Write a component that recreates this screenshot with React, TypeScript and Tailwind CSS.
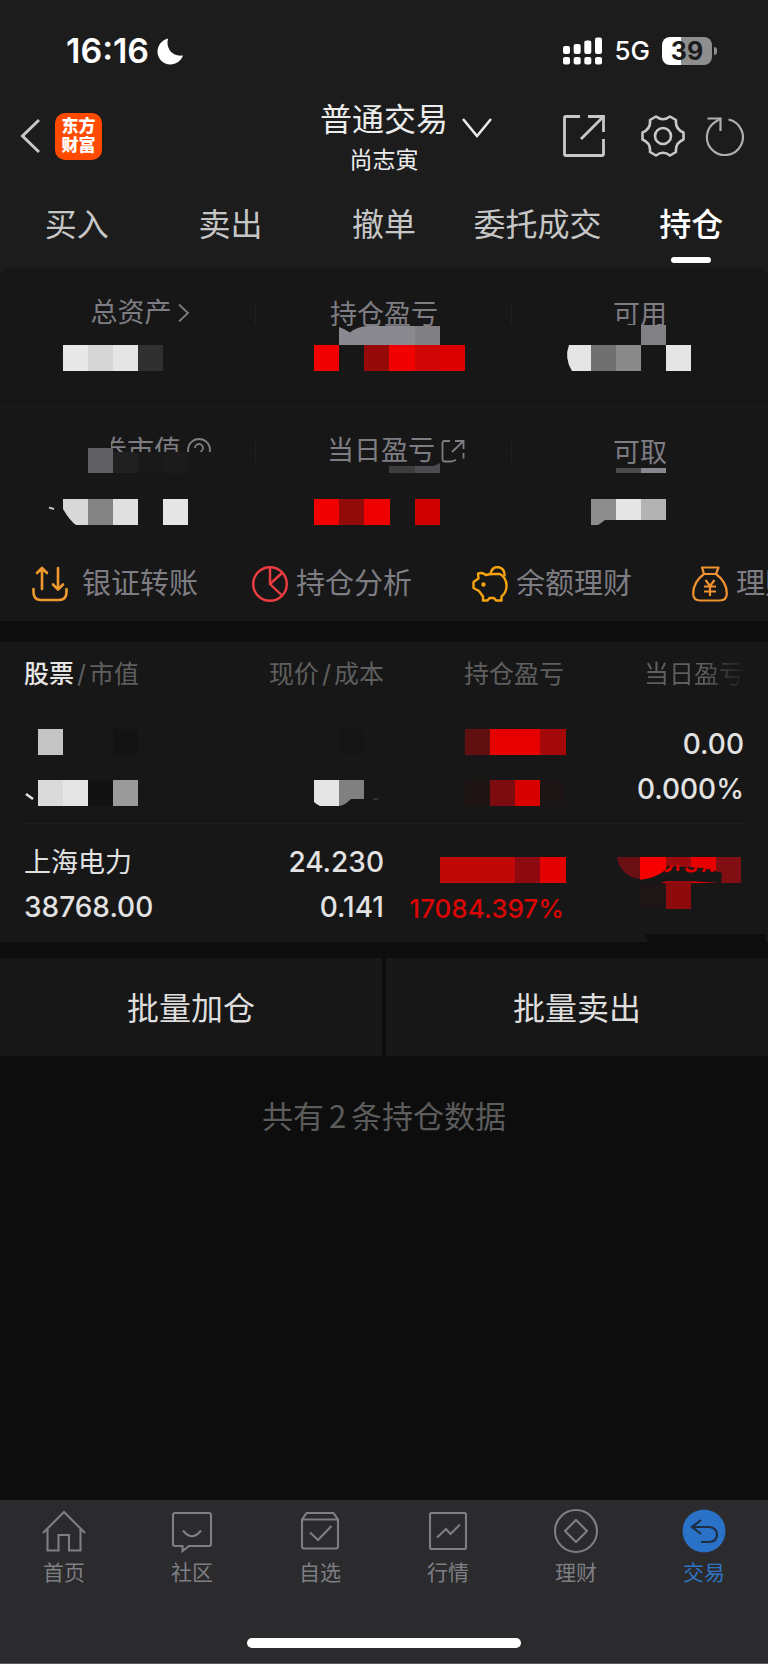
import type { ReactNode } from 'react';

/** A filled rectangle of a masked value: x, y, width, height, colour. */
type Block = [number, number, number, number, string];

interface MaskProps {
  blocks: Block[];
  width?: number;
  height?: number;
  children?: ReactNode;
}

/** Pixelated cover laid over a sensitive value in its cell. */
function Mask({ blocks, width = 256, height = 138, children }: MaskProps) {
  return (
    <svg
      className="absolute inset-0 w-full h-full overflow-visible pointer-events-none"
      viewBox={`0 0 ${width} ${height}`}
      aria-hidden="true"
    >
      {blocks.map(([x, y, w, h, fill]) => (
        <rect key={`${x}-${y}`} x={x} y={y} width={w} height={h} fill={fill} />
      ))}
      {children}
    </svg>
  );
}

function StatusBar() {
  return (
    <div className="flex items-center justify-between h-[94px] pt-2 pl-[66px] pr-[51px] text-white">
      <div className="flex items-center gap-2">
        <span className="text-[34px] leading-10 font-semibold">16:16</span>
        <svg className="w-[27px] h-[27px]" viewBox="0 0 27 27" fill="currentColor">
          <path d="M11 0.5C8.5 10 15 19 26 17.5C24 23 19 26.5 13.5 26.5C6 26.5 0.5 20.8 0.5 13.5C0.5 7.5 4.8 2 11 0.5z" />
        </svg>
      </div>
      <div className="flex items-center gap-3">
        <svg className="w-[39px] h-7" viewBox="0 0 39 28" fill="currentColor">
          <rect x="0" y="9" width="7" height="8" rx="2" />
          <rect x="10.7" y="7" width="7" height="10" rx="2" />
          <rect x="21.3" y="3.5" width="7" height="13.500" rx="2" />
          <rect x="32" y="0.500" width="7" height="16.500" rx="2" />
          <rect x="0" y="20" width="7" height="7.500" rx="2" />
          <rect x="10.7" y="20" width="7" height="7.500" rx="2" />
          <rect x="21.3" y="20" width="7" height="7.500" rx="2" />
          <rect x="32" y="20" width="7" height="7.500" rx="2" />
        </svg>
        <span className="text-[26px] leading-8 font-medium">5G</span>
        <div className="flex items-center gap-0.5">
          <div className="flex items-center justify-center w-[50px] h-7 rounded-lg bg-linear-to-r from-white from-39% to-[#8e8e8e] to-39% text-[25px] leading-7 font-bold text-[#1c1c1c]">
            39
          </div>
          <div className="w-[3px] h-2 rounded-r-full bg-[#8e8e8e]" />
        </div>
      </div>
    </div>
  );
}

function Header() {
  return (
    <header className="grid grid-cols-3 items-center h-[84px] text-[#c8c8c8]">
      <div className="flex items-center gap-[15px] pl-5">
        <button type="button" aria-label="返回">
          <svg className="w-5 h-9" viewBox="0 0 20 36" fill="none" stroke="currentColor" strokeWidth="3">
            <path d="M19 2L2.500 18L19 34" />
          </svg>
        </button>
        <div className="flex flex-col items-center justify-center w-[47px] h-[47px] rounded-[10px] bg-[#ff4a00] text-white text-[17px] leading-[19px] font-black">
          <span>东方</span>
          <span>财富</span>
        </div>
      </div>
      <div className="flex flex-col items-center pt-1 text-[#ececec]">
        <button type="button" className="relative text-[32px] leading-[44px] whitespace-nowrap">
          普通交易
          <svg
            className="absolute left-full top-1/2 ml-3.5 -mt-0.5 w-[30px] h-5"
            viewBox="0 0 30 20"
            fill="none"
            stroke="currentColor"
            strokeWidth="2.500"
          >
            <path d="M1 1L15 18L29 1" />
          </svg>
        </button>
        <span className="text-[23px] leading-9">尚志寅</span>
      </div>
      <div className="flex items-center justify-end pr-6">
        <button type="button" aria-label="分享" className="mr-9">
          <svg className="w-[42px] h-[42px]" viewBox="0 0 42 42" fill="none" stroke="currentColor" strokeWidth="2.800">
            <path d="M17 1.500H2.500Q1.500 1.500 1.500 2.500V39.500Q1.500 40.500 2.500 40.500H39.500Q40.500 40.500 40.500 39.500V24" />
            <path d="M25 1.500H40.500V17M40 2L18 24" />
          </svg>
        </button>
        <button type="button" aria-label="设置" className="mr-5">
          <svg className="w-11 h-[42px]" viewBox="0 0 44 42" fill="none" stroke="currentColor" strokeWidth="2.600" strokeLinejoin="round">
            <path d="M15 1.500Q22 7 29 1.500L35 5Q34 14 42.500 17.500V24.500Q34 28 35 37L29 40.500Q22 35 15 40.500L9 37Q10 28 1.500 24.500V17.500Q10 14 9 5z" />
            <circle cx="22" cy="21" r="8" />
          </svg>
        </button>
        <button type="button" aria-label="刷新">
          <svg className="w-[39px] h-[39px]" viewBox="0 0 39 39" fill="none" stroke="currentColor" strokeWidth="2.200" opacity="0.85">
            <path d="M23.500 2.500A18 18 0 1 1 11 4.500L15.500 1.500" />
            <path d="M2.500 1.500H15.500V14" />
          </svg>
        </button>
      </div>
    </header>
  );
}

const TABS = ['买入', '卖出', '撤单', '委托成交', '持仓'];

function TradeTabs() {
  return (
    <nav className="grid grid-cols-5 h-[90px] text-[32px] leading-10">
      {TABS.map((tab) => (
        <button
          key={tab}
          type="button"
          className={
            tab === '持仓'
              ? 'flex flex-col items-center pt-[27px] font-medium text-white'
              : 'flex flex-col items-center pt-[27px] text-[#c6c6c6]'
          }
        >
          <span className="whitespace-nowrap">{tab}</span>
          {tab === '持仓' && <span className="mt-3 w-10 h-1.5 rounded-full bg-white" />}
        </button>
      ))}
    </nav>
  );
}

interface AssetCellProps {
  label: string;
  icon?: ReactNode;
  divider?: boolean;
  children: ReactNode;
}

function AssetCell({ label, icon, divider, children }: AssetCellProps) {
  return (
    <div className="relative h-[138px]">
      <div
        className={
          icon
            ? 'flex items-center justify-center gap-1.5 pt-[25px] text-[27px] leading-10 text-[#7e7d83]'
            : 'flex items-center justify-center pt-[27px] text-[27px] leading-10 text-[#7e7d83]'
        }
      >
        {label}
        {icon}
      </div>
      {divider && <div className="absolute right-0 top-9 w-px h-5 bg-[#202020]" />}
      {children}
    </div>
  );
}

function Assets() {
  return (
    <div className="grid grid-cols-3">
      <AssetCell
        label="总资产"
        divider
        icon={
          <svg className="w-3 h-[18px] -mr-6" viewBox="0 0 12 18" fill="none" stroke="currentColor" strokeWidth="1.800">
            <path d="M1 0.500L10 9L1 17.500" />
          </svg>
        }
      >
        <Mask
          blocks={[
            [63, 77, 25, 26, '#e8e8e8'],
            [88, 77, 25, 26, '#d6d6d6'],
            [113, 77, 25, 26, '#e5e5e5'],
            [138, 77, 25, 26, '#303030'],
          ]}
        />
      </AssetCell>
      <AssetCell label="持仓盈亏" divider>
        <Mask
          blocks={[
            [58, 77, 25, 26, '#f00000'],
            [108, 77, 25, 26, '#970a0a'],
            [133, 77, 26, 26, '#f00000'],
            [159, 77, 25, 26, '#d00505'],
            [184, 77, 25, 26, '#dd0000'],
          ]}
        >
          <path d="M83 59Q89 61 94 64.500Q102 58 112 58H159V77H83z" fill="#8a898f" />
          <path d="M159 58H184V77H159z" fill="#808083" />
        </Mask>
      </AssetCell>
      <AssetCell label="可用">
        <Mask
          blocks={[
            [98, 57, 31, 20, '#171717'],
            [129, 57, 25, 20, '#808085'],
            [79, 77, 25, 26, '#707070'],
            [104, 77, 25, 26, '#8a8a8a'],
            [154, 77, 25, 26, '#e5e5e5'],
          ]}
        >
          <path d="M57 77H79V103H60Q52 90 57 77z" fill="#e5e5e5" />
        </Mask>
      </AssetCell>
      <div className="col-span-3 -mb-px h-px bg-[#1e1e1e]" />
      <AssetCell
        label="证券市值"
        divider
        icon={
          <svg className="w-6 h-6 -mr-7 overflow-visible" viewBox="0 0 24 24" fill="none" stroke="currentColor" strokeWidth="1.800">
            <circle cx="12" cy="11" r="11" />
            <path d="M8 9a4 4 0 1 1 6 3.500q-2 1.200-2 3" />
          </svg>
        }
      >
        <Mask
          blocks={[
            [60, 28, 51, 34, '#171717'],
            [111, 46, 110, 20, '#171717'],
            [88, 42, 25, 25, '#605f64'],
            [113, 46, 25, 21, '#202020'],
            [138, 46, 25, 21, '#191919'],
            [163, 46, 25, 21, '#1b1b1b'],
            [88, 93, 25, 26, '#838383'],
            [113, 93, 25, 26, '#e0e0e0'],
            [163, 93, 25, 26, '#e5e5e5'],
          ]}
        >
          <path d="M63 93H88V119H76Q70 115 63 103z" fill="#d8d8d8" />
          <path d="M49 101.500L54 103" stroke="#c0c0c0" strokeWidth="2" />
        </Mask>
      </AssetCell>
      <AssetCell
        label="当日盈亏"
        divider
        icon={
          <svg className="w-6 h-6 -mr-6" viewBox="0 0 24 24" fill="none" stroke="currentColor" strokeWidth="1.800">
            <path d="M9 2H3.500Q1.500 2 1.500 4V20Q1.500 22.500 4 22.500H10L15 21" />
            <path d="M14 2H22.500V10M22 2.500L11 13M22.500 14V19.500" />
          </svg>
        }
      >
        <Mask
          blocks={[
            [133, 60, 26, 7, '#3d3d40'],
            [58, 93, 25, 26, '#f00000'],
            [83, 93, 25, 26, '#930a0a'],
            [108, 93, 26, 26, '#ee0000'],
            [159, 93, 25, 26, '#d00000'],
          ]}
        >
          <path d="M159 60H178L184 57V67H159z" fill="#4c4c50" />
        </Mask>
      </AssetCell>
      <AssetCell label="可取">
        <Mask
          blocks={[
            [104, 62, 25, 5, '#4a4a4c'],
            [129, 62, 25, 5, '#87878d'],
            [104, 93, 25, 21, '#e5e5e5'],
            [129, 93, 25, 21, '#b3b3b3'],
          ]}
        >
          <path d="M79 93H104V114H93Q88 118 86 119H79z" fill="#8d8d8d" />
        </Mask>
      </AssetCell>
    </div>
  );
}

const SHORTCUTS: { label: string; icon: ReactNode }[] = [
  {
    label: '银证转账',
    icon: (
      <svg className="w-9 h-9 mr-1.5" viewBox="0 0 36 36" fill="none" stroke="#f0992e" strokeWidth="2.600" strokeLinecap="round" strokeLinejoin="round">
        <path d="M10 23V2.500M5 7L10 2L15 7M26 2V23M21 18.500L26 23.500L31 18.500" />
        <path d="M1.500 23V26Q1.500 34 9 34H27Q34.500 34 34.500 26V23" />
      </svg>
    ),
  },
  {
    label: '持仓分析',
    icon: (
      <svg className="w-9 h-9" viewBox="0 0 36 36" fill="none" stroke="#ec3c40" strokeWidth="2.400">
        <circle cx="18" cy="18" r="16.800" />
        <path d="M18 1V18L30 29.500M18 18L30 7" />
      </svg>
    ),
  },
  {
    label: '余额理财',
    icon: (
      <svg className="w-9 h-9" viewBox="0 0 36 36" fill="none" stroke="#f6a511" strokeWidth="2.400" strokeLinejoin="round">
        <path d="M6 7.500Q10 6 14 9Q17 8 21 8H28Q35 12 34.500 21Q34 27 29.500 30.500V34.500H24L22 32H17.500L15.500 34.500H11V30.500L7 25L1.500 22V16L6.500 12.500z" />
        <path d="M18.500 7.500Q20 1 26 1Q33 2 32.500 10.500" />
        <circle cx="11.500" cy="18.500" r="1" fill="#f6a511" />
      </svg>
    ),
  },
  {
    label: '理财产品',
    icon: (
      <svg className="w-9 h-9" viewBox="0 0 36 36" fill="none" stroke="#f0922f" strokeWidth="2.200" strokeLinejoin="round">
        <path d="M10 1.500H26.500L24 8H12z" />
        <path d="M12 8Q1 16 1.200 28Q1.500 34.500 8 34.500H28Q34.500 34.500 34.800 28Q35 16 24 8" />
        <path d="M13.500 14L18 20L22.500 14M12 20.500H24M12 25.500H24M18 20V30" />
      </svg>
    ),
  },
];

function Shortcuts() {
  return (
    <div className="flex h-[77px] pl-8 pt-0.5 overflow-hidden">
      {SHORTCUTS.map(({ label, icon }) => (
        <button
          key={label}
          type="button"
          className="flex items-center gap-2 w-[220px] shrink-0 text-[29px] leading-10 text-[#7e7d83]"
        >
          {icon}
          <span className="whitespace-nowrap">{label}</span>
        </button>
      ))}
    </div>
  );
}

function Holdings() {
  return (
    <section className="px-6 bg-[#171717]">
      <table className="w-full table-fixed text-right text-[28px] leading-[45px] font-medium text-[#e2e2e2]">
        <thead className="text-[25px] leading-[64px] text-[#5f5f5f]">
          <tr className="whitespace-nowrap">
            <th className="p-0 text-left font-normal">
              <span className="font-medium text-[#e6e6e6]">股票</span>
              <span className="mx-[3px]">/</span>市值
            </th>
            <th className="p-0 font-normal">
              现价<span className="mx-[3px]">/</span>成本
            </th>
            <th className="p-0 font-normal">持仓盈亏</th>
            <th className="p-0 font-normal">
              <span className="bg-linear-to-r from-[#5f5f5f] from-60% to-[#1c1c1c] bg-clip-text text-transparent">
                当日盈亏
              </span>
            </th>
          </tr>
        </thead>
        <tbody>
          <tr>
            <td className="p-0">
              <div className="relative h-[117px]">
                <Mask
                  width={180}
                  height={117}
                  blocks={[
                    [14, 23, 25, 26, '#c5c5c5'],
                    [89, 23, 25, 26, '#131313'],
                    [14, 74, 25, 26, '#dadada'],
                    [39, 74, 25, 26, '#e5e5e5'],
                    [64, 74, 25, 26, '#121212'],
                    [89, 74, 25, 26, '#9a9a9a'],
                  ]}
                >
                  <path d="M2 88L9 93" stroke="#e5e5e5" strokeWidth="2.500" />
                </Mask>
              </div>
            </td>
            <td className="p-0">
              <div className="relative h-[117px]">
                <Mask width={180} height={117} blocks={[[135, 23, 25, 26, '#151515']]}>
                  <path d="M110 74H135V100H116Q112 98 110 96z" fill="#e5e5e5" />
                  <path d="M135 74H160V93H147Q140 100 135 100z" fill="#808080" />
                  <path d="M169 93H174" stroke="#333333" strokeWidth="2" />
                </Mask>
              </div>
            </td>
            <td className="p-0">
              <div className="relative h-[117px]">
                <Mask
                  width={180}
                  height={117}
                  blocks={[
                    [81, 23, 25, 26, '#601010'],
                    [106, 23, 50, 26, '#e60000'],
                    [156, 23, 26, 26, '#a50808'],
                    [81, 74, 25, 26, '#1f1414'],
                    [106, 74, 25, 26, '#7d0c10'],
                    [131, 74, 25, 26, '#d90000'],
                    [156, 74, 25, 26, '#1b1516'],
                  ]}
                />
              </div>
            </td>
            <td className="p-0">
              <div className="h-[117px] pt-4">
                <div>0.00</div>
                <div>0.000%</div>
              </div>
            </td>
          </tr>
          <tr className="border-t border-[#1e1e1e]">
            <td className="p-0 text-left">
              <div className="h-[118px] pt-4">
                <div className="text-[27px] leading-[45px] font-normal">上海电力</div>
                <div>38768.00</div>
              </div>
            </td>
            <td className="p-0">
              <div className="h-[118px] pt-4">
                <div>24.230</div>
                <div>0.141</div>
              </div>
            </td>
            <td className="p-0">
              <div className="relative h-[118px] pt-[62px] text-[26px] leading-[45px] text-[#dc0505]">
                17084.397%
                <Mask
                  width={180}
                  height={118}
                  blocks={[
                    [56, 33, 75, 26, '#c00808'],
                    [131, 33, 25, 26, '#8d0a10'],
                    [156, 33, 26, 26, '#e20000'],
                  ]}
                />
              </div>
            </td>
            <td className="p-0">
              <div className="relative h-[118px]">
                <Mask
                  width={180}
                  height={118}
                  blocks={[
                    [76, 33, 26, 26, '#f60000'],
                    [102, 33, 25, 26, '#9a0a0e'],
                    [127, 33, 25, 26, '#e80000'],
                    [152, 33, 25, 26, '#7f0f12'],
                    [76, 59, 26, 25, '#1d1516'],
                    [102, 59, 25, 26, '#8d0a0d'],
                  ]}
                >
                  <path d="M53 33H76V55Q56 52 53 33z" fill="#6a1014" />
                  <path d="M75 56Q92 54 100 47L104 42L140 44L158 49L157 59L122 57H103L94 60H75z" fill="#171717" />
                  <path
                    d="M108 41Q107 47 101 47M114 41V47M122 44Q124 48 129 47Q133 46 132 42M139 48L143 42M148 43V48"
                    fill="none"
                    stroke="#e00000"
                    strokeWidth="2.800"
                  />
                  <path d="M81 110H202V119H86z" fill="#0d0d0d" />
                </Mask>
              </div>
            </td>
          </tr>
        </tbody>
      </table>
    </section>
  );
}

const NAV_ITEMS: { label: string; icon: ReactNode }[] = [
  { label: '首页', icon: <path d="M1 23L22 2L43 23M5.500 19V40.500H16.500V25H27V40.500H38.500V19" /> },
  {
    label: '社区',
    icon: (
      <>
        <path d="M5 3H39Q41 3 41 5V34Q41 36 39 36H19L12.500 41V36H5Q3 36 3 34V5Q3 3 5 3z" />
        <path d="M13 20.500Q22 32 31 20.500" />
      </>
    ),
  },
  {
    label: '自选',
    icon: (
      <>
        <path d="M4 9.500L8.500 3H35.500L40 9.500V36.500Q40 38.500 38 38.500H6Q4 38.500 4 36.500zM4 9.500H40" />
        <path d="M12 22.500L20 30L33.500 16" />
      </>
    ),
  },
  {
    label: '行情',
    icon: (
      <>
        <rect x="4" y="3" width="36" height="36" rx="1.500" />
        <path d="M11 27.500L20 19L24.500 24L34 14.500" />
      </>
    ),
  },
  {
    label: '理财',
    icon: (
      <>
        <circle cx="22" cy="21" r="21" />
        <path d="M22 10L33 21L22 32L11 21z" strokeLinejoin="round" />
      </>
    ),
  },
  {
    label: '交易',
    icon: (
      <>
        <circle cx="22" cy="21" r="21.500" fill="#2a72c8" stroke="none" />
        <path d="M19 10L10 17L19 24M10 17H27.500Q35 18 35 24.500Q35 31.500 27.500 32H19" stroke="#1f2d40" strokeWidth="2.200" />
      </>
    ),
  },
];

function BottomNav() {
  return (
    <footer className="mt-auto bg-[#2b2b2d] border-b border-[#5a5a5c]">
      <nav className="grid grid-cols-6 h-[138px] pt-2.5 text-[21px] leading-8">
        {NAV_ITEMS.map(({ label, icon }) => (
          <a
            key={label}
            href="#"
            className={
              label === '交易'
                ? 'flex flex-col items-center gap-[3px] text-[#2f74c4]'
                : 'flex flex-col items-center gap-[3px] text-[#7f7e84]'
            }
          >
            <svg
              className="w-11 h-11 overflow-visible"
              viewBox="0 0 44 44"
              fill="none"
              stroke="currentColor"
              strokeWidth="2.100"
            >
              {icon}
            </svg>
            {label}
          </a>
        ))}
      </nav>
      <div className="pb-[15px]">
        <div className="mx-auto w-[274px] h-2.5 rounded-full bg-white" />
      </div>
    </footer>
  );
}

export default function App() {
  return (
    <div className="flex flex-col min-h-screen bg-[#0d0d0d] font-['Inter','Noto_Sans_CJK_SC',sans-serif]">
      <div className="bg-[#1c1c1c]">
        <StatusBar />
        <Header />
        <TradeTabs />
        <section className="rounded-t-xl bg-[#171717]">
          <Assets />
          <Shortcuts />
        </section>
      </div>
      <main className="flex flex-col gap-4 pt-[21px]">
        <Holdings />
        <div className="grid grid-cols-2 gap-1 text-[32px] leading-[94px] text-[#dedede]">
          <button type="button" className="pt-1 bg-[#171717]">
            批量加仓
          </button>
          <button type="button" className="pt-1 bg-[#171717]">
            批量卖出
          </button>
        </div>
        <p className="pt-5 text-center text-[31px] leading-[46px] text-[#5c5c5c]">
          共有<span className="mx-[5px] font-['Noto_Sans_CJK_SC',sans-serif]">2</span>条持仓数据
        </p>
      </main>
      <BottomNav />
    </div>
  );
}
